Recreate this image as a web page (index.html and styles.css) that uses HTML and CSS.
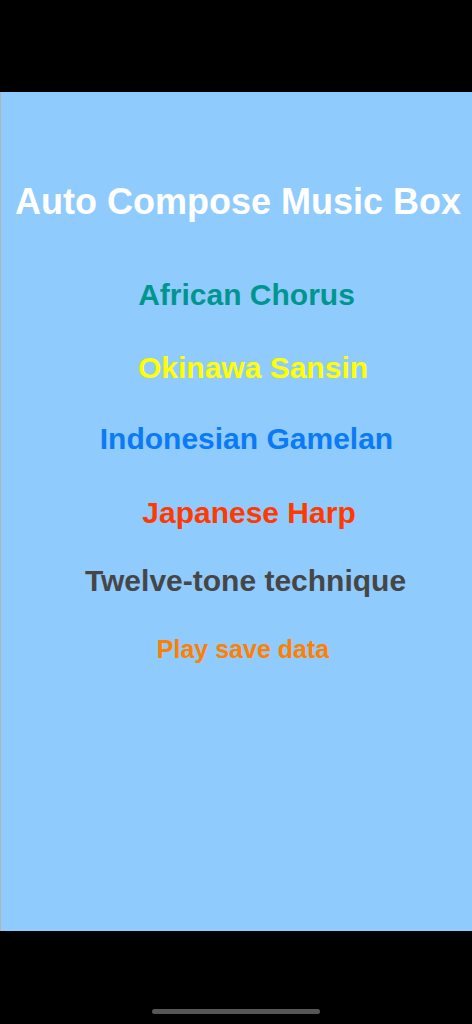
FILE: index.html
```html
<!DOCTYPE html>
<html>
<head>
<meta charset="utf-8">
<link rel="stylesheet" href="styles.css">
</head>
<body>
<div class="top-bar"></div>
<main class="screen">
  <h1 class="title">Auto Compose Music Box</h1>
  <div class="item african">African Chorus</div>
  <div class="item okinawa">Okinawa Sansin</div>
  <div class="item indonesian">Indonesian Gamelan</div>
  <div class="item japanese">Japanese Harp</div>
  <div class="item twelve">Twelve-tone technique</div>
  <div class="item play">Play save data</div>
</main>
<div class="bottom-bar"><div class="home-indicator"></div></div>
</body>
</html>
```
FILE: styles.css
```css
html, body {
  margin: 0;
  padding: 0;
  background: #000;
}
body {
  width: 472px;
  height: 1024px;
  overflow: hidden;
  font-family: "Liberation Sans", Arial, sans-serif;
  font-weight: bold;
}
.top-bar {
  height: 92px;
  background: #000;
}
.screen {
  box-sizing: border-box;
  height: 839px;
  background: #90cbfe;
  border-left: 1px solid #b4b4b4;
  display: flex;
  flex-direction: column;
  text-align: center;
}
.title {
  margin: 91.5px 0 0 0;
  padding-left: 3px;
  font-size: 36px;
  line-height: 36px;
  color: #fff;
  font-weight: bold;
}
.item {
  font-size: 30px;
  line-height: 30px;
}
.african {
  margin-top: 60px;
  padding-left: 20px;
  color: #00968f;
}
.okinawa {
  margin-top: 43px;
  padding-left: 33px;
  color: #ffff00;
}
.indonesian {
  margin-top: 41px;
  padding-left: 20px;
  color: #0a7af5;
}
.japanese {
  margin-top: 44px;
  padding-left: 25px;
  color: #ff3a00;
}
.twelve {
  margin-top: 38px;
  padding-left: 18px;
  color: #464646;
}
.play {
  margin-top: 41px;
  padding-left: 13px;
  font-size: 25px;
  line-height: 25px;
  color: #ff8000;
}
.bottom-bar {
  height: 93px;
  background: #000;
  display: flex;
  justify-content: center;
}
.home-indicator {
  margin-top: 78px;
  width: 168px;
  height: 5px;
  border-radius: 3px;
  background: #565656;
}
```
